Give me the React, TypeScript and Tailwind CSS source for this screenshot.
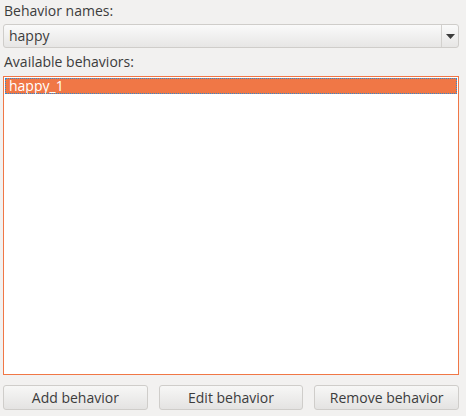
export default function App() {
  const font = { fontFamily: '"Open Sans", "DejaVu Sans", sans-serif' };
  return (
    <div
      className="w-[466px] h-[416px] bg-[#f2f1f0] pl-[3px] pr-[7px] text-[14px] text-[#3c3c3c] flex flex-col"
      style={font}
    >
      <div className="h-[24px] pl-[1px] pt-[1px] leading-[20px]">Behavior names:</div>
      <div className="h-[24px] flex rounded-[3px] border border-[#cfcdca] bg-gradient-to-b from-[#fafafa] to-[#e7e6e5]">
        <div className="flex-1 pl-[5px] leading-[22px]">happy</div>
        <div className="w-[17px] border-l border-[#d3d1ce] flex items-center justify-center">
          <svg width="9" height="5" viewBox="0 0 9 5">
            <path d="M0 0H9L4.5 5Z" fill="#3c3c3c" />
          </svg>
        </div>
      </div>
      <div className="h-[28px] pl-[1px] pt-[4px] leading-[20px]">Available behaviors:</div>
      <div className="h-[299px] border border-[#f07746] bg-white p-[1px]">
        <div className="h-[16px] bg-[#f07746] text-white outline-dotted outline-1 outline-[#2a8ad4] -outline-offset-1 pl-[4px] leading-[16px]">
          happy_1
        </div>
      </div>
      <div className="mt-[10px] flex gap-[11px]">
        {["Add behavior", "Edit behavior", "Remove behavior"].map((t) => (
          <button
            key={t}
            className="flex-1 h-[25px] rounded-[3px] border border-[#cfcdca] bg-gradient-to-b from-[#f7f7f6] to-[#e4e3e2] text-[#3c3c3c] leading-[22px]"
          >
            {t}
          </button>
        ))}
      </div>
    </div>
  );
}
